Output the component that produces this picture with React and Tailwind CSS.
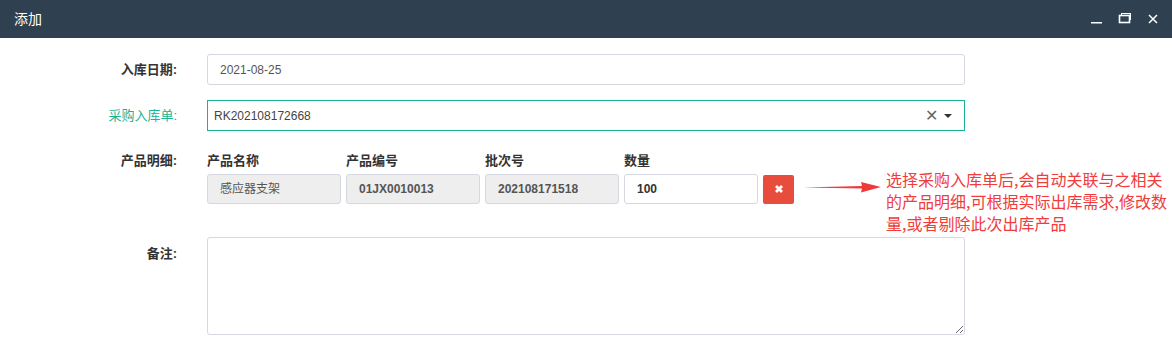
export default function App() {
  const font = { fontFamily: '"Liberation Sans", "Noto Sans CJK SC", Arial, sans-serif' };
  return (
    <div className="w-[1172px] h-[354px] bg-white overflow-hidden text-[12px] text-[#333]" style={font}>
      <div className="h-[38px] bg-[#2f4050] flex items-center justify-between pl-[14px] pr-[12px]">
        <span className="text-white text-[14px]">添加</span>
        <div className="flex items-center gap-[14px]">
          <svg width="14" height="14" viewBox="0 0 14 14" className="text-white">
            <rect x="1" y="10" width="11" height="1.5" fill="currentColor" />
          </svg>
          <svg width="14" height="14" viewBox="0 0 14 14" className="text-white">
            <rect x="3.5" y="1.5" width="9" height="6" fill="none" stroke="currentColor" strokeWidth="1" />
            <rect x="1.5" y="3.5" width="10" height="7" fill="#2f4050" stroke="currentColor" strokeWidth="1.6" />
          </svg>
          <svg width="14" height="14" viewBox="0 0 14 14" className="text-white">
            <path d="M3 3 L11 11 M11 3 L3 11" stroke="currentColor" strokeWidth="1.5" />
          </svg>
        </div>
      </div>
      <div className="pt-[16px]">
        <div className="flex items-center h-[31px]">
          <div className="w-[177px] shrink-0 text-right font-bold text-[13px] text-[#333]">入库日期:</div>
          <div className="ml-[30px] w-[758px] shrink-0 h-[31px] border border-[#d5d8e0] rounded-[3px] flex items-center px-[12px] text-[12px] text-[#555]">2021-08-25</div>
        </div>
        <div className="flex items-center h-[31px] mt-[15px]">
          <div className="w-[177px] shrink-0 text-right text-[13px] text-[#1ab394]">采购入库单:</div>
          <div className="ml-[30px] w-[758px] shrink-0 h-[31px] border border-[#1ab394] flex items-center pl-[6px] pr-[12px] text-[12px] text-[#444]">
            <span className="flex-1">RK202108172668</span>
            <span className="text-[#666] text-[16px] leading-none mr-[6px]">✕</span>
            <svg width="8" height="6" viewBox="0 0 8 6"><path d="M0 1 L8 1 L4 5 Z" fill="#333" /></svg>
          </div>
        </div>
        <div className="flex mt-[22px]">
          <div className="w-[177px] shrink-0 text-right font-bold text-[13px] leading-[15px]">产品明细:</div>
          <div className="ml-[30px] flex flex-col">
            <div className="flex gap-[5px] font-bold text-[13px] leading-[15px]">
              <div className="w-[134px] shrink-0">产品名称</div>
              <div className="w-[134px] shrink-0">产品编号</div>
              <div className="w-[134px] shrink-0">批次号</div>
              <div className="w-[134px] shrink-0">数量</div>
            </div>
            <div className="flex gap-[5px] mt-[6px] items-center h-[30px]">
              <div className="w-[134px] shrink-0 h-[30px] bg-[#eeeeee] border border-[#d5d8e0] rounded-[3px] flex items-center px-[12px] text-[12px] text-[#555]">感应器支架</div>
              <div className="w-[134px] shrink-0 h-[30px] bg-[#eeeeee] border border-[#d5d8e0] rounded-[3px] flex items-center px-[12px] text-[12px] text-[#555] font-bold">01JX0010013</div>
              <div className="w-[134px] shrink-0 h-[30px] bg-[#eeeeee] border border-[#d5d8e0] rounded-[3px] flex items-center px-[12px] text-[12px] text-[#555] font-bold">202108171518</div>
              <div className="w-[134px] shrink-0 h-[30px] bg-white border border-[#d5d8e0] rounded-[3px] flex items-center px-[12px] text-[12px] text-[#333] font-bold">100</div>
              <div className="w-[31px] shrink-0 h-[29px] bg-[#e74c3c] rounded-[2px] flex items-center justify-center">
                <svg width="10" height="10" viewBox="0 0 10 10"><path d="M2 2 L8 8 M8 2 L2 8" stroke="white" strokeWidth="2.8" /></svg>
              </div>
              <div className="relative shrink-0 w-[370px] h-[30px]">
                <svg width="80" height="16" viewBox="0 0 80 16" className="absolute left-[4px] top-[5px]">
                  <path d="M0 8.5 L59 7 L58 3 L78 8 L58 13.5 L59 9.5 Z" fill="#f03a3a" />
                </svg>
                <div className="absolute left-[87px] -top-[6px] w-[288px] text-[16px] leading-[22px] text-[#f23b3b]" style={{ fontFamily: '"Noto Sans CJK SC", sans-serif' }}>
                  选择采购入库单后,会自动关联与之相关的产品明细,可根据实际出库需求,修改数量,或者剔除此次出库产品
                </div>
              </div>
            </div>
          </div>
        </div>
        <div className="flex mt-[33px]">
          <div className="w-[177px] shrink-0 text-right font-bold text-[13px] pt-[7px]">备注:</div>
          <textarea className="ml-[30px] w-[758px] shrink-0 h-[98px] border border-[#d5d8e0] rounded-[3px] block" />
        </div>
      </div>
    </div>
  );
}
